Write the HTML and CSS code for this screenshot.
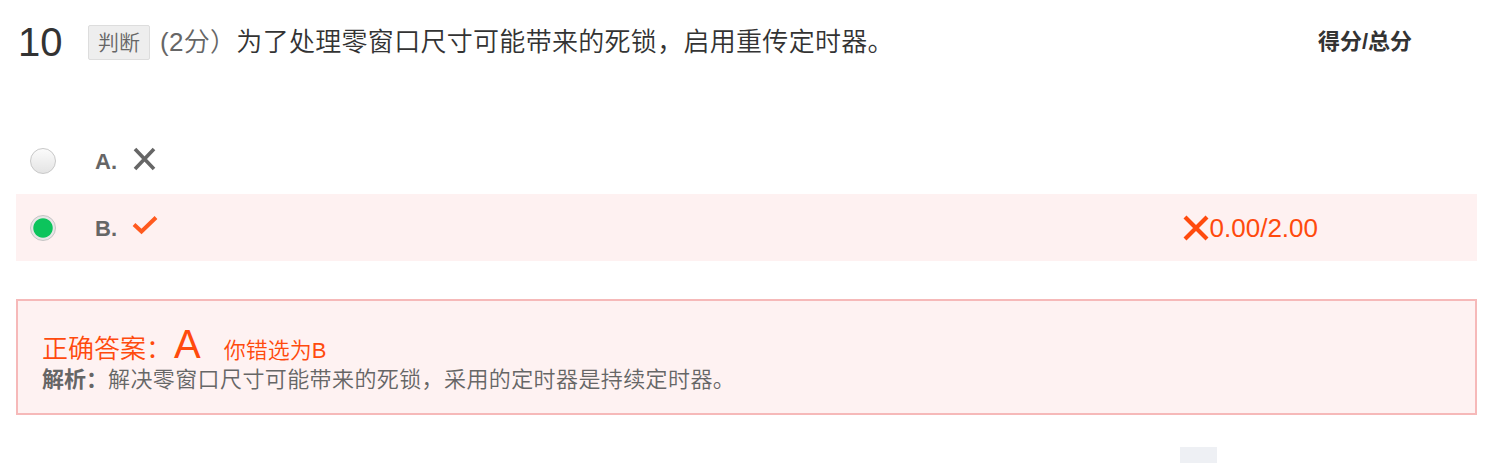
FILE: index.html
```html
<!DOCTYPE html>
<html lang="zh-CN">
<head>
<meta charset="utf-8">
<title>判断题</title>
<link rel="stylesheet" href="styles.css">
</head>
<body>
<div class="page">
  <div class="q-head">
    <span class="q-num">10</span>
    <span class="q-tag">判断</span>
    <span class="q-title"><span class="q-score">(2分）</span>为了处理零窗口尺寸可能带来的死锁，启用重传定时器。</span>
    <span class="q-total">得分/总分</span>
  </div>

  <div class="opt">
    <span class="radio"></span>
    <span class="opt-label">A.</span>
    <svg class="icon-x" width="25" height="24" viewBox="0 0 25 24"><path d="M3 2 L22 22 M22 2 L3 22" stroke="#666" stroke-width="3.6" fill="none"/></svg>
  </div>
  <div class="opt opt-chosen">
    <span class="radio radio-on"></span>
    <span class="opt-label">B.</span>
    <svg class="icon-check" width="26" height="20" viewBox="0 0 26 20"><path d="M2 9.5 L9.5 16.5 L24 2.5" stroke="#ff5a1f" stroke-width="4" fill="none"/></svg>
    <span class="opt-score"><svg class="icon-wrong" width="26" height="26" viewBox="0 0 26 26"><path d="M2 2 L24 24 M24 2 L2 24" stroke="#ff4a0d" stroke-width="4.2" fill="none"/></svg>0.00/2.00</span>
  </div>

  <div class="answer">
    <div class="ans-line"><span class="ans-key">正确答案：</span><span class="ans-letter">A</span><span class="ans-mine">你错选为B</span></div>
    <div class="ans-note"><b>解析：</b>解决零窗口尺寸可能带来的死锁，采用的定时器是持续定时器。</div>
  </div>

  <div class="next-row"><span class="next-btn"></span></div>
</div>
</body>
</html>
```

FILE: styles.css
```css
html, body {
  margin: 0;
  padding: 0;
  background: #fff;
  overflow: hidden;
}
body {
  font-family: "Liberation Sans", "Noto Sans CJK SC", sans-serif;
  color: #333;
}
.page {
  width: 1461px;
  padding: 0 26px 0 16px;
}
.q-head {
  display: flex;
  align-items: center;
  height: 44px;
  margin-top: 20px;
  margin-bottom: 63px;
}
.q-num {
  font-size: 40px;
  line-height: 44px;
  margin-left: 2px;
  width: 42px;
  color: #333;
}
.q-tag {
  margin-left: 28px;
  height: 33px;
  line-height: 33px;
  padding: 0 9px;
  border: 1px solid #ddd;
  border-radius: 2px;
  background: #eee;
  color: #666;
  font-size: 21px;
  font-weight: 350;
}
.q-title {
  margin-left: 10px;
  font-size: 26px;
  line-height: 34px;
  letter-spacing: 0.3px;
  font-weight: 350;
  color: #333;
}
.q-score {
  color: #666;
}
.q-total {
  margin-left: auto;
  margin-right: 65px;
  margin-top: -6px;
  font-size: 22px;
  font-weight: bold;
  color: #333;
}
.opt {
  display: flex;
  align-items: center;
  height: 67px;
}
.opt-chosen {
  background: #fef1f1;
}
.radio {
  width: 24px;
  height: 24px;
  margin-left: 14px;
  border-radius: 50%;
  border: 1px solid #c8c8c8;
  background: linear-gradient(#fbfbfb, #e4e4e4);
}
.radio-on {
  background: radial-gradient(circle, #0cc45c 0 9.2px, #e6e6e6 10.2px);
  border-color: #c4c4c4;
}
.opt-label {
  margin-left: 39px;
  width: 37px;
  font-size: 22px;
  font-weight: bold;
  color: #666;
  line-height: 26px;
  padding-top: 2px;
}
.icon-x {
  margin-top: -3px;
}
.icon-check {
  margin-top: -6px;
}
.opt-score {
  display: flex;
  align-items: center;
  margin-left: auto;
  margin-right: 159px;
  font-size: 26px;
  color: #ff4a0d;
  line-height: 30px;
}
.icon-wrong {
  margin-right: 1px;
}
.answer {
  margin-top: 38px;
  border: 2px solid #f6b9b9;
  background: #fef2f2;
  padding: 22px 24px 18px;
  height: 72px;
}
.ans-line {
  display: flex;
  align-items: baseline;
  height: 42px;
  line-height: 42px;
  color: #ff4a0d;
}
.ans-key {
  font-size: 26px;
  font-weight: 350;
}
.ans-letter {
  font-size: 40px;
  margin-left: 2px;
}
.ans-mine {
  font-size: 22px;
  font-weight: 350;
  margin-left: 23px;
}
.ans-note {
  font-size: 22px;
  line-height: 30px;
  letter-spacing: 0.4px;
  font-weight: 350;
  color: #666;
}
.ans-note b {
  font-weight: bold;
  letter-spacing: 0;
}
.next-row {
  display: flex;
  margin-top: 32px;
}
.next-btn {
  margin-left: 1164px;
  width: 37px;
  height: 20px;
  background: #eef0f4;
}
```
